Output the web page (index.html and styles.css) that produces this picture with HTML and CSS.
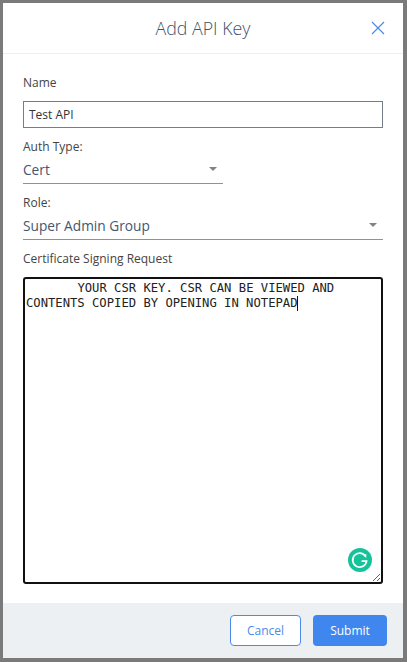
FILE: index.html
```html
<!DOCTYPE html>
<html lang="en">
<head>
  <meta charset="UTF-8" />
  <title>Add API Key</title>
  <link rel="stylesheet" href="styles.css">
</head>
<body>

  <div class="modal">
    <div class="modal-header">
      <h1>Add API Key</h1>
      <button type="button" class="btn-close" aria-label="Close">
        <svg width="14" height="14" viewBox="0 0 14 14"><path d="M1 1L13 13M13 1L1 13" fill="none" stroke="#4a8bea" stroke-width="1.2"/></svg>
      </button>
    </div>

    <form class="modal-body">
      <label class="label-name" for="name">Name</label>
      <input type="text" id="name" class="text-input" value="Test API" />

      <label class="label-auth">Auth Type:</label>
      <div class="select select-short">
        <span>Cert</span>
        <i class="arrow"></i>
      </div>

      <label class="label-role">Role:</label>
      <div class="select">
        <span>Super Admin Group</span>
        <i class="arrow"></i>
      </div>

      <label class="label-csr" for="csr">Certificate Signing Request</label>
      <div class="csr-wrap">
        <textarea id="csr" spellcheck="false">       YOUR CSR KEY. CSR CAN BE VIEWED AND CONTENTS COPIED BY OPENING IN NOTEPAD</textarea>
        <i class="caret"></i>
        <!-- Grammarly badge -->
        <span class="grammarly">
          <svg width="24" height="24" viewBox="0 0 24 24">
            <circle cx="12" cy="12" r="12" fill="#15c39a"/>
            <path d="M17.5 8.2A7 7 0 1 0 18.6 13.2H13.6" fill="none" stroke="#fff" stroke-width="1.7"/>
            <path d="M14.6 6.6L18.4 6.2L18.2 10Z" fill="#fff"/>
          </svg>
        </span>
      </div>
    </form>

    <div class="modal-footer">
      <button type="button" class="btn btn-cancel">Cancel</button>
      <button type="submit" class="btn btn-submit">Submit</button>
    </div>
  </div>

</body>
</html>
```

FILE: styles.css
```css
* {
  box-sizing: border-box;
}
html, body {
  height: 100%;
}
body {
  margin: 0;
  background: #7a7a7a;
  padding: 3px 4px 4px 3px;
  font-family: "Open Sans", sans-serif;
  color: #444;
}

.modal {
  background: #fff;
  height: 100%;
  display: flex;
  flex-direction: column;
}

.modal-header {
  height: 51px;
  flex: none;
  border-bottom: 1px solid #eceff1;
  display: flex;
  align-items: center;
  justify-content: center;
  position: relative;
}

h1 {
  margin: 0;
  font-size: 17.8px;
  font-weight: 300;
  color: #43526b;
}

.btn-close {
  position: absolute;
  right: 18px;
  top: 18px;
  padding: 0;
  border: none;
  background: none;
  display: flex;
}

.modal-body {
  flex: 1;
  padding: 0 20px;
  display: flex;
  flex-direction: column;
}

label {
  display: block;
  font-size: 12px;
  line-height: 16px;
  color: #444;
}
.label-name { margin-top: 21px; }
.label-auth { margin-top: 11px; }
.label-role { margin-top: 11px; }
.label-csr { margin-top: 11px; }

.text-input {
  width: 360px;
  height: 27px;
  margin-top: 10px;
  padding: 0 5px;
  border: 1px solid #747d88;
  border-radius: 0;
  font-family: inherit;
  font-size: 12px;
  color: #333;
  outline: none;
}

.select {
  width: 360px;
  height: 29px;
  border-bottom: 1px solid #8b929a;
  display: flex;
  align-items: center;
  justify-content: space-between;
  font-size: 13.7px;
  color: #44566e;
  padding-right: 6px;
}
.select-short {
  width: 200px;
}

.arrow {
  width: 0;
  height: 0;
  border-left: 4.5px solid transparent;
  border-right: 4.5px solid transparent;
  border-top: 4px solid #7d848c;
}

.csr-wrap {
  position: relative;
  width: 360px;
  height: 307px;
  margin-top: 10px;
}

textarea {
  display: block;
  width: 100%;
  height: 100%;
  border: 2px solid #111;
  border-radius: 3px;
  padding: 2px 1px;
  margin: 0;
  font-family: "DejaVu Sans Mono", monospace;
  font-size: 12.2px;
  line-height: 15px;
  color: #222;
  outline: none;
}

.caret {
  position: absolute;
  left: 274px;
  top: 19px;
  width: 1px;
  height: 15px;
  background: #111;
}

.grammarly {
  position: absolute;
  right: 11px;
  bottom: 12px;
  display: flex;
}

.modal-footer {
  height: 55px;
  flex: none;
  background: #edf0f3;
  display: flex;
  justify-content: flex-end;
  gap: 12px;
  padding: 12px 16px 0 0;
}

.btn {
  height: 31px;
  border-radius: 4px;
  font-family: inherit;
  font-size: 12px;
  font-weight: 500;
  padding: 0;
}
.btn-cancel {
  width: 71px;
  background: #fff;
  border: 1px solid #4a8bea;
  color: #4a8bea;
  font-weight: 400;
}
.btn-submit {
  width: 74px;
  background: #3f87ee;
  border: none;
  color: #fff;
}
```
